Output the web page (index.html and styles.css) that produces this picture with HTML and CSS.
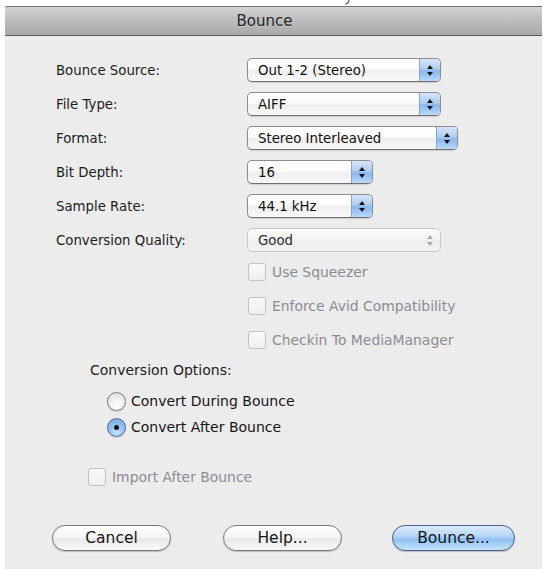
FILE: index.html
```html
<!DOCTYPE html>
<html lang="en">
<head>
<meta charset="utf-8">
<title>Bounce</title>
<link rel="stylesheet" href="styles.css">
</head>
<body>
<div class="strip">
  <svg class="hook" width="8" height="7" viewBox="0 0 8 7"><path d="M6 0 C6 3 5 5 2 5" fill="none" stroke="#555" stroke-width="1.2"/></svg>
</div>
<div class="window">
  <div class="titlebar"><span class="title">Bounce</span></div>
  <div class="content">
    <div class="form">
      <div class="row">
        <span class="label">Bounce Source:</span>
        <div class="popup w194"><span class="value">Out 1-2 (Stereo)</span><span class="arrows"><i class="up"></i><i class="down"></i></span></div>
      </div>
      <div class="row">
        <span class="label">File Type:</span>
        <div class="popup w194"><span class="value">AIFF</span><span class="arrows"><i class="up"></i><i class="down"></i></span></div>
      </div>
      <div class="row">
        <span class="label">Format:</span>
        <div class="popup w211"><span class="value">Stereo Interleaved</span><span class="arrows"><i class="up"></i><i class="down"></i></span></div>
      </div>
      <div class="row">
        <span class="label">Bit Depth:</span>
        <div class="popup w126"><span class="value">16</span><span class="arrows"><i class="up"></i><i class="down"></i></span></div>
      </div>
      <div class="row">
        <span class="label">Sample Rate:</span>
        <div class="popup w126"><span class="value">44.1 kHz</span><span class="arrows"><i class="up"></i><i class="down"></i></span></div>
      </div>
      <div class="row">
        <span class="label">Conversion Quality:</span>
        <div class="popup w194 disabled"><span class="value">Good</span><span class="arrows"><i class="up"></i><i class="down"></i></span></div>
      </div>
    </div>

    <div class="checks">
      <label class="check disabled"><span class="box"></span>Use Squeezer</label>
      <label class="check disabled"><span class="box"></span>Enforce Avid Compatibility</label>
      <label class="check disabled"><span class="box"></span>Checkin To MediaManager</label>
    </div>

    <div class="options">
      <div class="options-title">Conversion Options:</div>
      <div class="radios">
        <label class="radio"><span class="dot"></span>Convert During Bounce</label>
        <label class="radio on"><span class="dot"></span>Convert After Bounce</label>
      </div>
    </div>

    <label class="check disabled import"><span class="box"></span>Import After Bounce</label>

    <div class="buttons">
      <button class="btn">Cancel</button>
      <button class="btn">Help...</button>
      <button class="btn default">Bounce...</button>
    </div>
  </div>
</div>
</body>
</html>
```

FILE: styles.css
```css
* { box-sizing: border-box; }

html, body {
  margin: 0;
  padding: 0;
  background: #ffffff;
  font-family: "DejaVu Sans", "Liberation Sans", sans-serif;
  color: #1c1c1c;
  overflow: hidden;
}

.strip {
  height: 6px;
  display: flex;
  padding-left: 343px;
}

.hook { display: block; margin-top: -1px; }

.window {
  margin-left: 5px;
  width: 537px;
  height: 563px;
  background: #ececec;
}

/* title bar */
.titlebar {
  height: 30px;
  border-top: 1px solid #6f6f6f;
  border-bottom: 1px solid #5e5e5e;
  border-top-left-radius: 3px;
  background: linear-gradient(#d4d4d4, #bdbdbd 45%, #a9a9a9);
  display: flex;
  align-items: center;
  justify-content: center;
  padding-right: 18px;
}

.title {
  font-size: 15px;
  color: #222;
  text-shadow: 0 1px 0 rgba(255,255,255,0.35);
}

.content {
  padding-top: 17px;
  font-size: 13.3px;
}

/* label + popup rows */
.form { display: flex; flex-direction: column; }

.row {
  height: 34px;
  display: flex;
  align-items: center;
}

.label {
  width: 242px;
  padding-left: 51px;
}

.popup {
  height: 24px;
  display: flex;
  align-items: stretch;
  border: 1px solid #8d8d8d;
  border-bottom-color: #6f6f6f;
  border-radius: 5px;
  background: linear-gradient(#ffffff, #fbfbfb 45%, #eeeeee 55%, #f9f9f9);
  box-shadow: 0 1px 1px rgba(0,0,0,0.12);
  overflow: hidden;
}

.w194 { width: 194px; }
.w211 { width: 211px; }
.w126 { width: 126px; }

.value {
  flex: 1;
  display: flex;
  align-items: center;
  padding-left: 10px;
  color: #111;
}

.arrows {
  width: 21px;
  border-left: 1px solid #8ea3c3;
  background: linear-gradient(#d5e5f9, #afcdf2 45%, #88b6ee 55%, #b9dafc);
  display: flex;
  flex-direction: column;
  align-items: center;
  justify-content: center;
  gap: 3px;
}

.arrows i {
  width: 0;
  height: 0;
  border-left: 3px solid transparent;
  border-right: 3px solid transparent;
}
.arrows .up { border-bottom: 4px solid #111; }
.arrows .down { border-top: 4px solid #111; }

.popup.disabled {
  border-color: #c6c6c6;
  box-shadow: none;
  background: linear-gradient(#fbfbfb, #f3f3f3 50%, #eeeeee 55%, #f4f4f4);
}
.popup.disabled .value { color: #2a2a2a; }
.popup.disabled .arrows {
  background: transparent;
  border-left: none;
}
.popup.disabled .up { border-bottom-color: #a8a8a8; }
.popup.disabled .down { border-top-color: #a8a8a8; }

/* checkboxes */
.checks {
  margin-top: -2px;
  display: flex;
  flex-direction: column;
  padding-left: 243px;
}

.check {
  height: 34px;
  display: flex;
  align-items: center;
  gap: 6px;
  font-size: 13.9px;
}

.check.disabled { color: #8b8b93; }

.box {
  width: 18px;
  height: 18px;
  border: 1px solid #c3c3c3;
  border-radius: 3px;
  background: linear-gradient(#f9f9f9, #efefef);
}

/* conversion options */
.options {
  margin-top: 5px;
  padding-left: 85px;
  font-size: 14px;
}

.options-title {
  height: 16px;
  line-height: 16px;
}

.radios {
  margin-top: 10px;
  padding-left: 17px;
  display: flex;
  flex-direction: column;
}

.radio {
  height: 26px;
  display: flex;
  align-items: center;
  gap: 5px;
  color: #151515;
}

.dot {
  width: 19px;
  height: 19px;
  border-radius: 50%;
  border: 1px solid #7c7c7c;
  background: radial-gradient(circle at 50% 75%, #ffffff 0, #f2f2f2 40%, #d6d6d6 100%);
  box-shadow: 0 1px 1px rgba(0,0,0,0.15);
  display: flex;
  align-items: center;
  justify-content: center;
}

.radio.on .dot {
  border-color: #4f6c98;
  background: radial-gradient(circle at 50% 80%, #c4e3fd 0, #93c1f1 45%, #6d9fdc 100%);
}
.radio.on .dot::after {
  content: "";
  width: 5px;
  height: 5px;
  border-radius: 50%;
  background: #141414;
}

.import {
  margin-top: 27px;
  margin-left: 83px;
  height: 20px;
}

/* bottom buttons */
.buttons {
  margin-top: 38px;
  padding-left: 47px;
  display: flex;
  gap: 52px;
}

.btn {
  width: 119px;
  height: 26px;
  border-radius: 13px;
  border: 1px solid #7a7a7a;
  background: linear-gradient(#ffffff, #f7f7f7 45%, #e9e9e9 55%, #fafafa);
  box-shadow: 0 1px 1px rgba(0,0,0,0.2);
  font-family: "DejaVu Sans", "Liberation Sans", sans-serif;
  font-size: 15.5px;
  color: #151515;
  padding: 0;
  line-height: 22px;
}

.btn.default {
  width: 123px;
  margin-left: -2px;
  border-color: #4d5f92;
  background: linear-gradient(#dcebfc, #b3d3f6 45%, #8ec0f2 55%, #c6e5fd);
}
```
